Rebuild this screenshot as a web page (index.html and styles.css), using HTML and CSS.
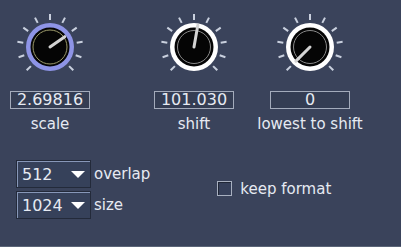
FILE: index.html
```html
<!DOCTYPE html>
<html lang="en">
<head>
    <meta charset="UTF-8">
    <title>Pitch shift</title>
    <link rel="stylesheet" href="styles.css">
</head>
<body>
    <svg class="defs" width="0" height="0">
        <defs>
            <g id="ticks">
                <line x1="0" y1="-27" x2="0" y2="-33"/>
                <line x1="12.3" y1="-24.1" x2="15" y2="-29.4"/>
                <line x1="21.8" y1="-15.9" x2="26.7" y2="-19.4"/>
                <line x1="26.7" y1="-4.2" x2="32.6" y2="-5.2"/>
                <line x1="25.7" y1="8.3" x2="31.4" y2="10.2"/>
                <line x1="19.1" y1="19.1" x2="23.3" y2="23.3"/>
                <line x1="-12.3" y1="-24.1" x2="-15" y2="-29.4"/>
                <line x1="-21.8" y1="-15.9" x2="-26.7" y2="-19.4"/>
                <line x1="-26.7" y1="-4.2" x2="-32.6" y2="-5.2"/>
                <line x1="-25.7" y1="8.3" x2="-31.4" y2="10.2"/>
                <line x1="-19.1" y1="19.1" x2="-23.3" y2="23.3"/>
            </g>
        </defs>
    </svg>

    <!-- knobs -->
    <div class="knobs">
        <div class="knob-col">
            <svg class="knob" viewBox="-35 -35 70 70" width="70" height="70">
                <use href="#ticks" class="ticks"/>
                <circle r="24" class="ring active"/>
                <circle r="19.5" class="face"/>
                <circle r="17" class="inner olive"/>
                <line x1="0" y1="0" x2="0" y2="-18" class="pointer" transform="rotate(55)"/>
            </svg>
            <div class="value">2.69816</div>
            <div class="label">scale</div>
        </div>
        <div class="knob-col shift">
            <svg class="knob" viewBox="-35 -35 70 70" width="70" height="70">
                <use href="#ticks" class="ticks"/>
                <circle r="24" class="ring"/>
                <circle r="19.5" class="face"/>
                <circle r="16.5" class="inner"/>
                <line x1="0" y1="0" x2="0" y2="-22" class="pointer" transform="rotate(10)"/>
            </svg>
            <div class="value">101.030</div>
            <div class="label">shift</div>
        </div>
        <div class="knob-col lowest">
            <svg class="knob" viewBox="-35 -35 70 70" width="70" height="70">
                <use href="#ticks" class="ticks"/>
                <circle r="24" class="ring"/>
                <circle r="19.5" class="face"/>
                <circle r="16.5" class="inner"/>
                <line x1="0" y1="0" x2="0" y2="-20" class="pointer" transform="rotate(-135)"/>
            </svg>
            <div class="value wide">0</div>
            <div class="label">lowest to shift</div>
        </div>
    </div>

    <!-- options -->
    <div class="options">
        <div class="selects">
            <div class="select-row">
                <div class="select"><span>512</span><i class="arrow"></i></div>
                <span class="opt-label">overlap</span>
            </div>
            <div class="select-row">
                <div class="select"><span>1024</span><i class="arrow"></i></div>
                <span class="opt-label">size</span>
            </div>
        </div>
        <label class="check">
            <span class="box"></span>
            <span>keep format</span>
        </label>
    </div>
</body>
</html>
```

FILE: styles.css
```css
body {
    margin: 0;
    width: 401px;
    height: 247px;
    background-color: #3a435b;
    color: #e6eaf2;
    font-family: "DejaVu Sans", Verdana, sans-serif;
    overflow: hidden;
    border-bottom: 1px solid #5b6578;
    box-sizing: border-box;
}
.defs {
    position: absolute;
}
.knobs {
    display: flex;
    padding-top: 12px;
}
.knob-col {
    width: 100px;
    display: flex;
    flex-direction: column;
    align-items: center;
}
.knob-col.shift {
    margin-left: 44px;
}
.knob-col.lowest {
    width: 106px;
    margin-left: 13px;
}
.knob {
    display: block;
}
.ticks {
    stroke: #c9d0de;
    stroke-width: 2;
}
.ring {
    fill: #ffffff;
}
.ring.active {
    fill: #8e94e6;
}
.face {
    fill: #050505;
}
.inner {
    fill: none;
    stroke: #8a8a8a;
    stroke-width: 1;
}
.inner.olive {
    stroke: #9c9a6a;
}
.pointer {
    stroke: #d4d4d4;
    stroke-width: 3;
    stroke-linecap: round;
}
.value {
    margin-top: 9px;
    height: 16px;
    line-height: 16px;
    padding: 0 3px;
    min-width: 72px;
    border: 1px solid #a3abbb;
    background-color: #343d53;
    font-size: 16px;
    text-align: center;
}
.value.wide {
    width: 72px;
}
.label {
    margin-top: 6px;
    font-size: 15px;
    line-height: 18px;
    white-space: nowrap;
}
.options {
    display: flex;
    align-items: center;
    margin-top: 27px;
    padding-left: 16px;
}
.selects {
    display: flex;
    flex-direction: column;
    gap: 3px;
}
.select-row {
    display: flex;
    align-items: center;
    gap: 3px;
}
.select {
    width: 75px;
    height: 28px;
    display: flex;
    align-items: center;
    justify-content: space-between;
    padding: 0 5px 0 5px;
    box-sizing: border-box;
    border: 1px solid #232a3a;
    box-shadow: inset 1px 1px 0 #8797b8;
    background-color: #36415a;
    font-size: 16px;
}
.arrow {
    width: 0;
    height: 0;
    border-left: 7px solid transparent;
    border-right: 7px solid transparent;
    border-top: 7px solid #ffffff;
}
.opt-label {
    font-size: 15px;
}
.check {
    display: flex;
    align-items: center;
    gap: 8px;
    margin-left: 67px;
    margin-top: -2px;
    font-size: 15px;
}
.check .box {
    width: 13px;
    height: 13px;
    border: 1px solid #a8b0c0;
    box-shadow: inset 1px 1px 0 #1f2636;
    background-color: #36405a;
}
```
